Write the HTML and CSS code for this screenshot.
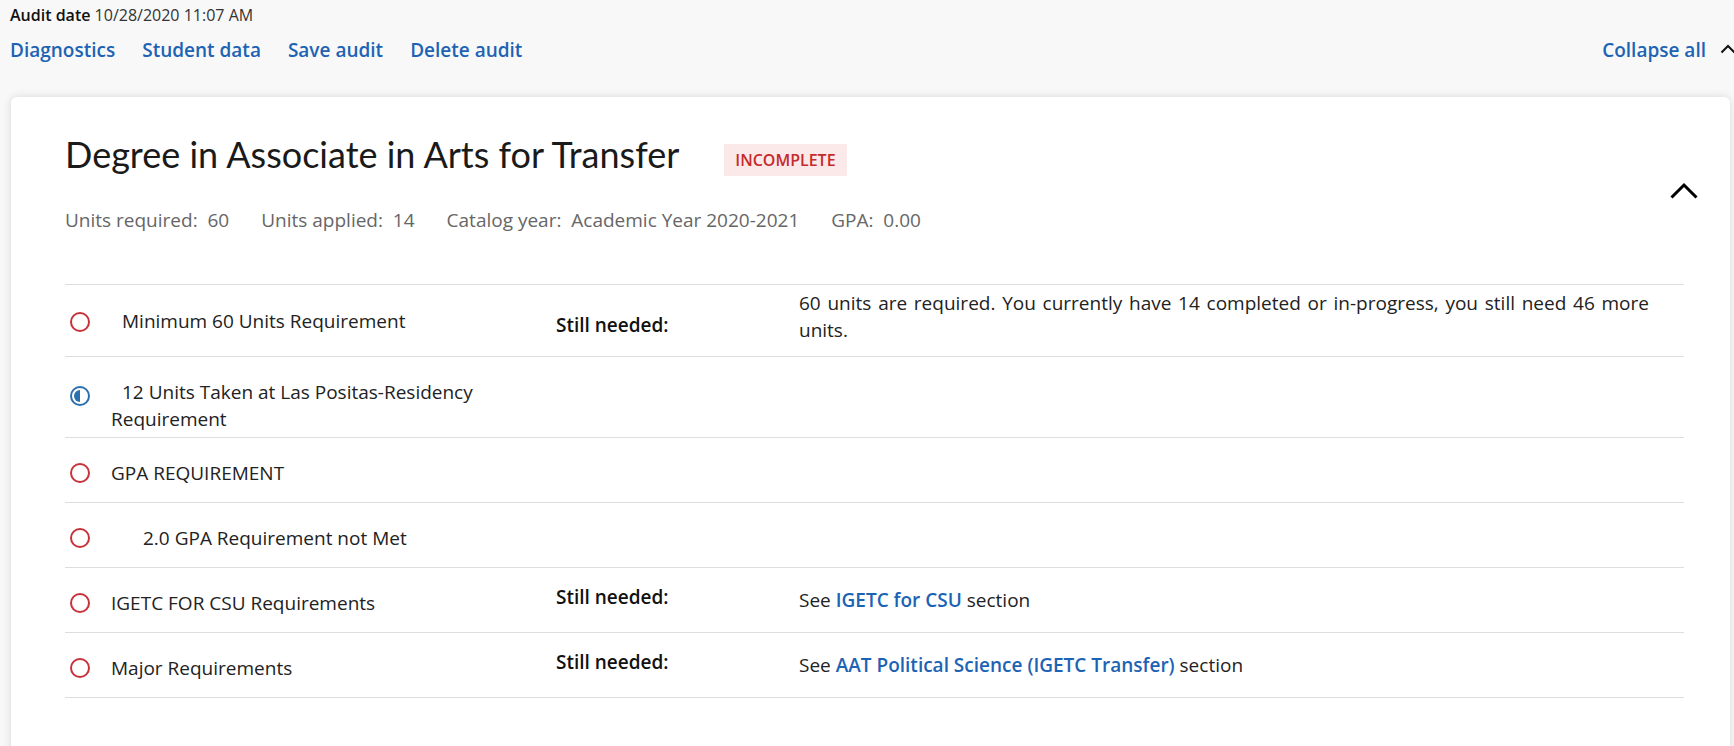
FILE: index.html
```html
<!DOCTYPE html>
<html lang="en">
<head>
<meta charset="utf-8">
<title>Audit</title>
<link rel="stylesheet" href="styles.css">
</head>
<body>
<header class="top">
  <div class="audit-date"><span class="audit-label">Audit date</span> 10/28/2020 11:07 AM</div>
  <div class="actions">
    <nav class="links">
      <a href="#">Diagnostics</a>
      <a href="#">Student data</a>
      <a href="#">Save audit</a>
      <a href="#">Delete audit</a>
    </nav>
    <div class="collapse">
      <a href="#">Collapse all</a>
      <svg class="chev-small" width="16" height="10" viewBox="0 0 16 10"><path d="M1.5 8.5 L8 2 L14.5 8.5" fill="none" stroke="#111" stroke-width="2"/></svg>
    </div>
  </div>
</header>

<section class="card">
  <div class="card-head">
    <div class="head-main">
      <div class="title-row">
        <h1 class="title">Degree in Associate in Arts for Transfer</h1>
        <span class="badge">INCOMPLETE</span>
      </div>
      <div class="meta">
        <span>Units required:&nbsp; 60</span>
        <span>Units applied:&nbsp; 14</span>
        <span>Catalog year:&nbsp; Academic Year 2020-2021</span>
        <span>GPA:&nbsp; 0.00</span>
      </div>
    </div>
    <svg class="chev-big" width="28" height="17" viewBox="0 0 28 17"><path d="M1.5 15.5 L14 3 L26.5 15.5" fill="none" stroke="#000" stroke-width="3"/></svg>
  </div>

  <div class="reqs">
    <div class="req req-1">
      <span class="icon icon-a"><svg width="22" height="22" viewBox="0 0 22 22"><circle cx="11" cy="11" r="9" fill="none" stroke="#c8323b" stroke-width="2"/></svg></span>
      <span class="label indent-s">Minimum 60 Units Requirement</span>
      <span class="needed needed-1">Still needed:</span>
      <span class="detail detail-1">60 units are required. You currently have 14 completed or in-progress, you still need 46 more units.</span>
    </div>
    <div class="req req-2">
      <span class="icon icon-b"><svg width="22" height="22" viewBox="0 0 22 22"><circle cx="11" cy="11" r="9" fill="none" stroke="#2c6fae" stroke-width="2"/><path d="M11 5 A6 6 0 0 0 11 17 Z" fill="#2c6fae"/></svg></span>
      <span class="label label-2 indent-s">12 Units Taken at Las Positas-Residency Requirement</span>
      <span></span>
      <span></span>
    </div>
    <div class="req">
      <span class="icon"><svg width="22" height="22" viewBox="0 0 22 22"><circle cx="11" cy="11" r="9" fill="none" stroke="#c8323b" stroke-width="2"/></svg></span>
      <span class="label">GPA REQUIREMENT</span>
      <span></span>
      <span></span>
    </div>
    <div class="req">
      <span class="icon"><svg width="22" height="22" viewBox="0 0 22 22"><circle cx="11" cy="11" r="9" fill="none" stroke="#c8323b" stroke-width="2"/></svg></span>
      <span class="label indent-l">2.0 GPA Requirement not Met</span>
      <span></span>
      <span></span>
    </div>
    <div class="req">
      <span class="icon"><svg width="22" height="22" viewBox="0 0 22 22"><circle cx="11" cy="11" r="9" fill="none" stroke="#c8323b" stroke-width="2"/></svg></span>
      <span class="label">IGETC FOR CSU Requirements</span>
      <span class="needed">Still needed:</span>
      <span class="detail">See <a href="#">IGETC for CSU</a> section</span>
    </div>
    <div class="req">
      <span class="icon"><svg width="22" height="22" viewBox="0 0 22 22"><circle cx="11" cy="11" r="9" fill="none" stroke="#c8323b" stroke-width="2"/></svg></span>
      <span class="label">Major Requirements</span>
      <span class="needed">Still needed:</span>
      <span class="detail">See <a href="#">AAT Political Science (IGETC Transfer)</a> section</span>
    </div>
  </div>
</section>
</body>
</html>
```

FILE: styles.css
```css
html {
  overflow-x: hidden;
}
body {
  margin: 0;
  background: #f8f8f8;
  font-family: "Open Sans", "Noto Sans", sans-serif;
  color: #222;
  overflow-x: hidden;
}
a {
  color: #1d63b4;
  text-decoration: none;
}

.top {
  padding: 0 0 0 10px;
}
.audit-date {
  margin-top: 5px;
  font-size: 16px;
  line-height: 20px;
  color: #333;
}
.audit-label {
  font-weight: 600;
  color: #111;
}
.actions {
  display: flex;
  justify-content: space-between;
  align-items: center;
  margin-top: 12px;
}
.links {
  display: flex;
  gap: 27px;
}
.links a,
.collapse a {
  font-size: 19px;
  line-height: 26px;
  font-weight: 600;
}
.collapse {
  display: flex;
  align-items: center;
  gap: 14px;
  margin-right: -2px;
}
.chev-small {
  margin-top: -2px;
}

.card {
  margin: 34px 4px 0 11px;
  background: #fff;
  border-radius: 6px;
  box-shadow: 0 0 8px rgba(0, 0, 0, 0.13);
  padding: 35px 32px 60px 54px;
}
.card-head {
  display: flex;
  justify-content: space-between;
  align-items: flex-start;
}
.chev-big {
  margin-top: 50px;
}
.title-row {
  display: flex;
  align-items: flex-start;
}
.title {
  margin: 0;
  font-family: "Lato", "Open Sans", sans-serif;
  font-weight: 400;
  font-size: 36px;
  line-height: 44px;
  color: #1a1a1a;
}
.badge {
  margin-left: 45px;
  margin-top: 12px;
  padding: 0 11px;
  height: 32px;
  line-height: 32px;
  background: #fbe8e8;
  color: #c62a2a;
  font-size: 16px;
  font-weight: 600;
}
.meta {
  display: flex;
  gap: 32px;
  margin-top: 31px;
  font-size: 19px;
  line-height: 26px;
  color: #666;
}

.reqs {
  margin-top: 51px;
  margin-right: 14px;
  border-top: 1px solid #ddd;
}
.req {
  display: grid;
  grid-template-columns: 46px 445px 243px 1fr;
  align-items: center;
  min-height: 65px;
  box-sizing: border-box;
  padding: 5px 0;
  border-bottom: 1px solid #ddd;
  font-size: 19px;
  line-height: 26px;
}
.icon {
  display: flex;
  margin-left: 4px;
  margin-top: 6px;
}
.icon-a {
  margin-top: 2px;
}
.icon-b {
  margin-top: 0;
  margin-bottom: 3px;
}
.label {
  margin-top: 6px;
  color: #222;
}
.req-1 .label {
  margin-top: 0;
}
.label-2 {
  margin-top: 17px;
  line-height: 26.5px;
}
.indent-s {
  text-indent: 11px;
}
.indent-l {
  text-indent: 32px;
}
.needed {
  font-weight: 600;
  color: #111;
  margin-bottom: 6px;
}
.needed-1 {
  margin-bottom: 0;
  margin-top: 8px;
}
.detail {
  color: #222;
  padding-right: 20px;
}
.detail a {
  font-weight: 600;
}
.detail-1 {
  line-height: 27px;
  margin-bottom: 7px;
  word-spacing: 1.8px;
}
```
